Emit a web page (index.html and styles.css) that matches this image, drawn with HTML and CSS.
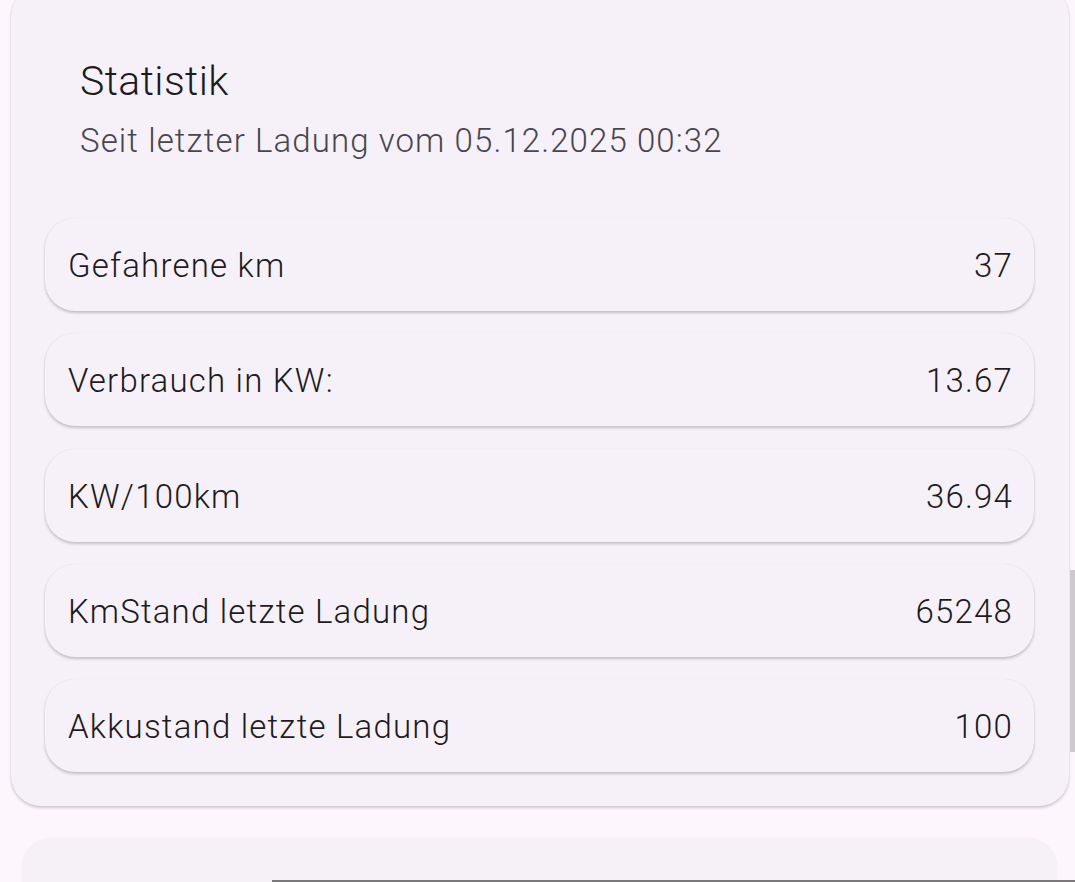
FILE: index.html
```html
<!DOCTYPE html>
<html lang="de">
<head>
<meta charset="utf-8">
<title>Statistik</title>
<link rel="stylesheet" href="styles.css">
</head>
<body>
<main class="screen">
  <section class="card stats">
    <header class="stats-head">
      <h1 class="title">Statistik</h1>
      <p class="subtitle">Seit letzter Ladung vom 05.12.2025 00:32</p>
    </header>
    <ul class="rows">
      <li class="row"><span>Gefahrene km</span><span>37</span></li>
      <li class="row"><span>Verbrauch in KW:</span><span>13.67</span></li>
      <li class="row"><span>KW/100km</span><span>36.94</span></li>
      <li class="row"><span>KmStand letzte Ladung</span><span>65248</span></li>
      <li class="row"><span>Akkustand letzte Ladung</span><span>100</span></li>
    </ul>
  </section>
  <section class="card next"></section>
  <div class="scroll-thumb"></div>
  <div class="bottom-bar"></div>
</main>
</body>
</html>
```

FILE: styles.css
```css
html, body {
  margin: 0;
  padding: 0;
}
body {
  background: #fdf7fd;
  font-family: Roboto, "Noto Sans", sans-serif;
  color: #1d1b20;
  width: 1075px;
  height: 882px;
  overflow: hidden;
}
.screen {
  position: relative;
  width: 1075px;
  height: 882px;
  overflow: hidden;
}
.card {
  background: #f6f1f8;
  border-radius: 30px;
}
.stats {
  margin: -14px 6px 0 11px;
  padding: 0 35px 34px 34px;
  box-shadow: 0 2px 3px rgba(0, 0, 0, 0.18), 0 0 1px rgba(0, 0, 0, 0.12);
}
.stats-head {
  padding: 70px 0 0 35px;
}
.title {
  margin: 0;
  font-weight: 360;
  font-size: 41px;
  line-height: 50px;
  letter-spacing: 0.4px;
  color: #1d1b20;
}
.subtitle {
  margin: 15px 0 0;
  font-weight: 360;
  font-size: 33px;
  line-height: 40px;
  letter-spacing: 1.1px;
  color: #49454f;
}
.rows {
  list-style: none;
  margin: 57px 0 0;
  padding: 0;
  display: flex;
  flex-direction: column;
  gap: 22.3px;
}
.row {
  height: 93px;
  box-sizing: border-box;
  display: flex;
  align-items: center;
  justify-content: space-between;
  padding: 2px 21px 0 23px;
  background: #f6f1f8;
  border-radius: 30px;
  font-size: 33px;
  font-weight: 360;
  letter-spacing: 1.2px;
  color: #1d1b20;
  box-shadow: 0 2px 3px rgba(0, 0, 0, 0.2), 0 0 1px rgba(0, 0, 0, 0.1);
}
.next {
  margin: 32px 18px 0 22px;
  height: 120px;
  background: #f5f1f7;
  box-shadow: 0 0 2px rgba(0, 0, 0, 0.06);
}
.scroll-thumb {
  position: absolute;
  right: 0;
  top: 570px;
  width: 5px;
  height: 182px;
  background: #cdc9cf;
}
.bottom-bar {
  position: absolute;
  left: 272px;
  right: 0;
  bottom: 0;
  height: 2px;
  background: #7a787b;
}
```
